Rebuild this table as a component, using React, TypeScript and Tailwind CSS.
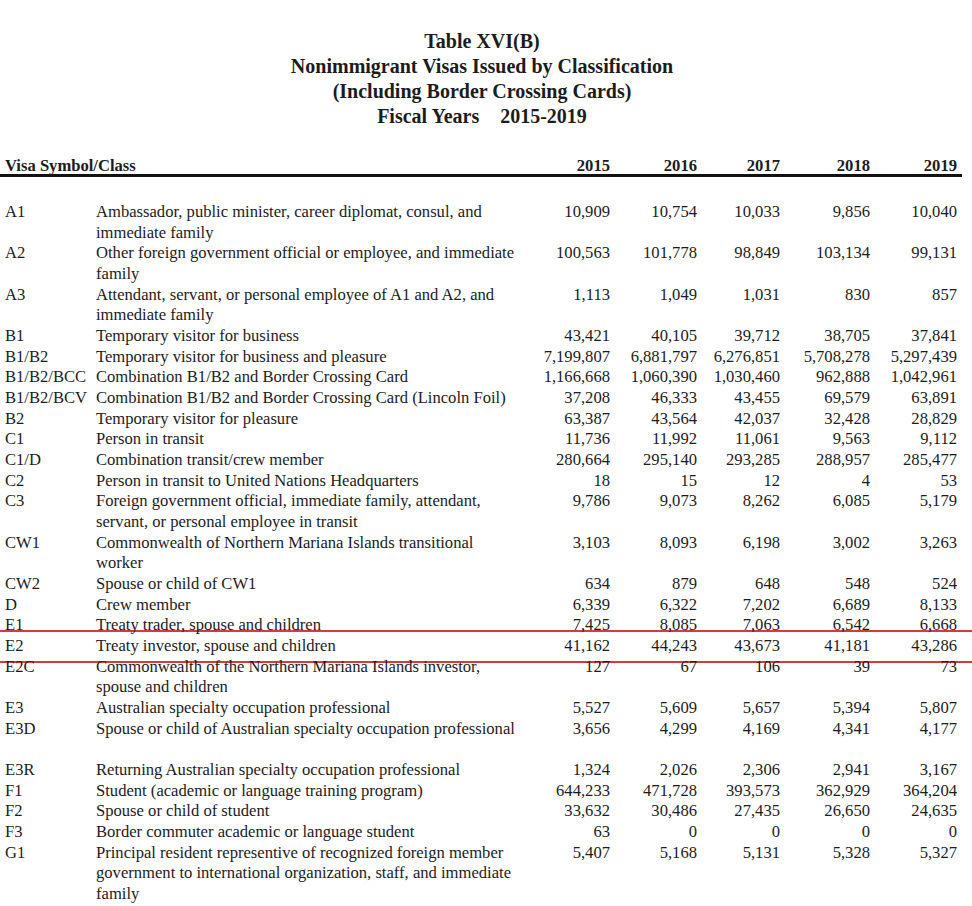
import React from "react";

type Row = {
  sym: string;
  desc: string[];
  nums: string[];
  hl?: boolean;
  gapBefore?: boolean;
};

const rows: Row[] = [
  { sym: "A1", desc: ["Ambassador, public minister, career diplomat, consul, and", "immediate family"], nums: ["10,909", "10,754", "10,033", "9,856", "10,040"] },
  { sym: "A2", desc: ["Other foreign government official or employee, and immediate", "family"], nums: ["100,563", "101,778", "98,849", "103,134", "99,131"] },
  { sym: "A3", desc: ["Attendant, servant, or personal employee of A1 and A2, and", "immediate family"], nums: ["1,113", "1,049", "1,031", "830", "857"] },
  { sym: "B1", desc: ["Temporary visitor for business"], nums: ["43,421", "40,105", "39,712", "38,705", "37,841"] },
  { sym: "B1/B2", desc: ["Temporary visitor for business and pleasure"], nums: ["7,199,807", "6,881,797", "6,276,851", "5,708,278", "5,297,439"] },
  { sym: "B1/B2/BCC", desc: ["Combination B1/B2 and Border Crossing Card"], nums: ["1,166,668", "1,060,390", "1,030,460", "962,888", "1,042,961"] },
  { sym: "B1/B2/BCV", desc: ["Combination B1/B2 and Border Crossing Card (Lincoln Foil)"], nums: ["37,208", "46,333", "43,455", "69,579", "63,891"] },
  { sym: "B2", desc: ["Temporary visitor for pleasure"], nums: ["63,387", "43,564", "42,037", "32,428", "28,829"] },
  { sym: "C1", desc: ["Person in transit"], nums: ["11,736", "11,992", "11,061", "9,563", "9,112"] },
  { sym: "C1/D", desc: ["Combination transit/crew member"], nums: ["280,664", "295,140", "293,285", "288,957", "285,477"] },
  { sym: "C2", desc: ["Person in transit to United Nations Headquarters"], nums: ["18", "15", "12", "4", "53"] },
  { sym: "C3", desc: ["Foreign government official, immediate family, attendant,", "servant, or personal employee in transit"], nums: ["9,786", "9,073", "8,262", "6,085", "5,179"] },
  { sym: "CW1", desc: ["Commonwealth of Northern Mariana Islands transitional", "worker"], nums: ["3,103", "8,093", "6,198", "3,002", "3,263"] },
  { sym: "CW2", desc: ["Spouse or child of CW1"], nums: ["634", "879", "648", "548", "524"] },
  { sym: "D", desc: ["Crew member"], nums: ["6,339", "6,322", "7,202", "6,689", "8,133"] },
  { sym: "E1", desc: ["Treaty trader, spouse and children"], nums: ["7,425", "8,085", "7,063", "6,542", "6,668"] },
  { sym: "E2", desc: ["Treaty investor, spouse and children"], nums: ["41,162", "44,243", "43,673", "41,181", "43,286"], hl: true },
  { sym: "E2C", desc: ["Commonwealth of the Northern Mariana Islands investor,", "spouse and children"], nums: ["127", "67", "106", "39", "73"] },
  { sym: "E3", desc: ["Australian specialty occupation professional"], nums: ["5,527", "5,609", "5,657", "5,394", "5,807"] },
  { sym: "E3D", desc: ["Spouse or child of Australian specialty occupation professional"], nums: ["3,656", "4,299", "4,169", "4,341", "4,177"] },
  { sym: "E3R", desc: ["Returning Australian specialty occupation professional"], nums: ["1,324", "2,026", "2,306", "2,941", "3,167"], gapBefore: true },
  { sym: "F1", desc: ["Student (academic or language training program)"], nums: ["644,233", "471,728", "393,573", "362,929", "364,204"] },
  { sym: "F2", desc: ["Spouse or child of student"], nums: ["33,632", "30,486", "27,435", "26,650", "24,635"] },
  { sym: "F3", desc: ["Border commuter academic or language student"], nums: ["63", "0", "0", "0", "0"] },
  { sym: "G1", desc: ["Principal resident representive of recognized foreign member", "government to international organization, staff, and immediate", "family"], nums: ["5,407", "5,168", "5,131", "5,328", "5,327"] },
];

const years = ["2015", "2016", "2017", "2018", "2019"];

function RowView({ r }: { r: Row }) {
  const cells = (
    <div className="relative z-20 grid grid-cols-[96px_424px_90px_87px_83px_90px_87px]">
      <div className="pl-[5px] whitespace-nowrap">{r.sym}</div>
      <div className="whitespace-nowrap">
        {r.desc.map((d, i) => (
          <div key={i}>{d}</div>
        ))}
      </div>
      {r.nums.map((n, i) => (
        <div key={i} className="text-right whitespace-nowrap">
          {n}
        </div>
      ))}
    </div>
  );
  return (
    <>
      {r.gapBefore && <div className="h-[20.67px]" />}
      {r.hl ? (
        <div className="relative">
          <div className="absolute z-10 -left-[2px] -right-[14px] -top-[6px] -bottom-[6px] border-2 border-[#d8393c] bg-white" />
          {cells}
        </div>
      ) : (
        cells
      )}
    </>
  );
}

export default function App() {
  return (
    <div className="w-[972px] min-h-[906px] bg-white text-[#1c1c1c] font-['Liberation_Serif',serif] overflow-hidden">
      <div className="w-[964px] pt-[29px] text-center text-[20px] font-bold leading-[25px]">
        <div>Table XVI(B)</div>
        <div>Nonimmigrant Visas Issued by Classification</div>
        <div>(Including Border Crossing Cards)</div>
        <div>
          Fiscal Years<span className="ml-[21px]">2015-2019</span>
        </div>
      </div>
      <div className="mt-[29px] w-[962px] border-b-[3px] border-[#111] grid grid-cols-[96px_424px_90px_87px_83px_90px_87px] text-[16.6px] font-bold leading-[16px]">
        <div className="col-span-2 pl-[5px] whitespace-nowrap">Visa Symbol/Class</div>
        {years.map((y) => (
          <div key={y} className="text-right">
            {y}
          </div>
        ))}
      </div>
      <div className="mt-[25px] text-[16.6px] leading-[20.67px]">
        {rows.map((r) => (
          <RowView key={r.sym} r={r} />
        ))}
      </div>
    </div>
  );
}
